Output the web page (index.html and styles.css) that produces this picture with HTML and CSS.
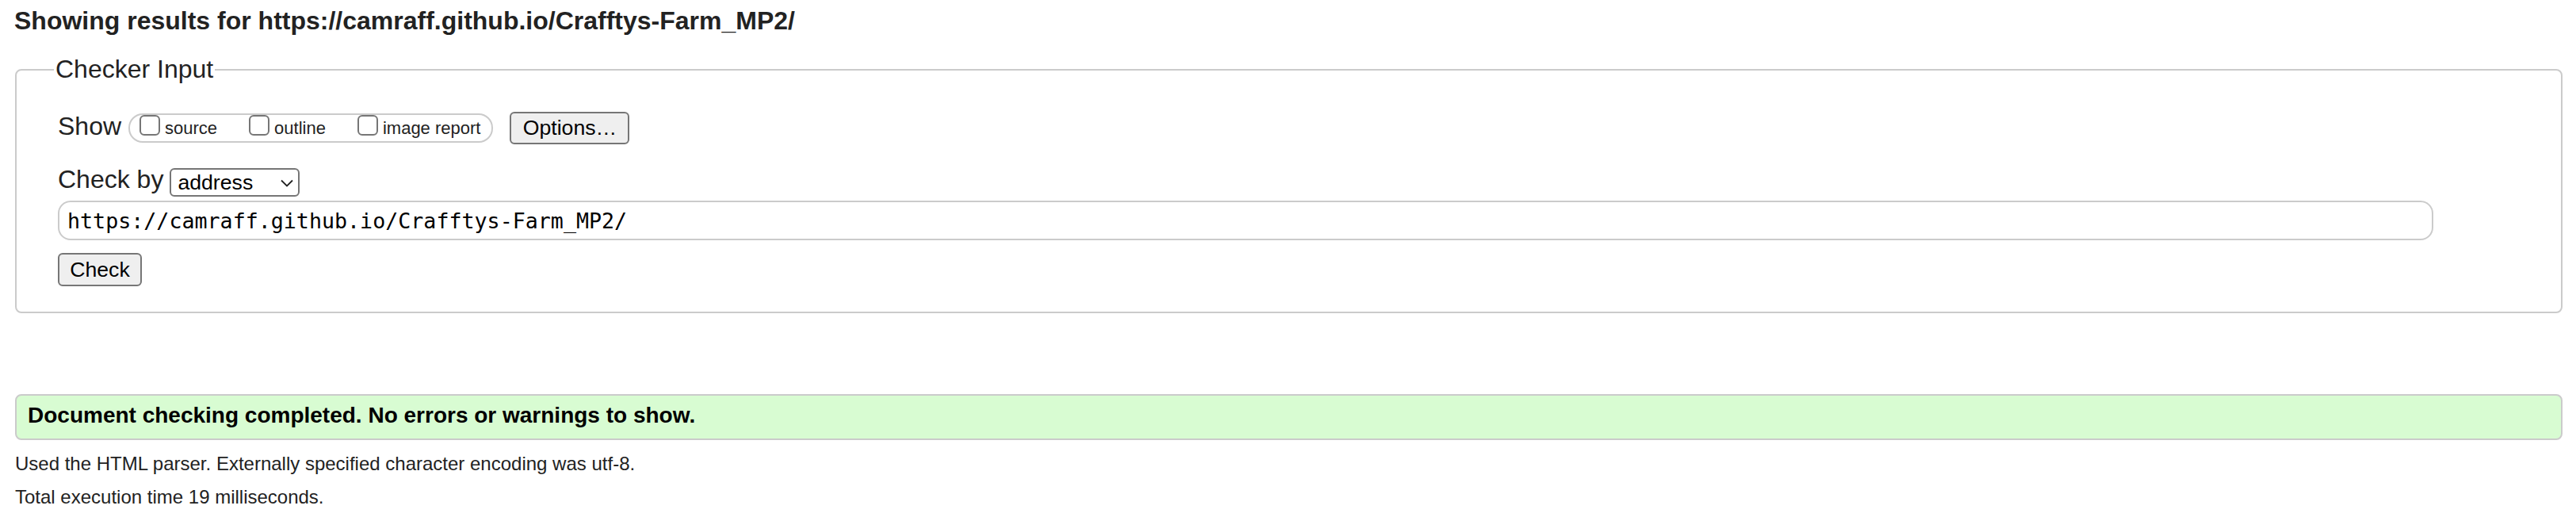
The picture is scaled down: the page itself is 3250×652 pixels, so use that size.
FILE: index.html
```html
<!DOCTYPE html>
<html lang="en">
<head>
<meta charset="utf-8">
<title>Nu Html Checker</title>
<link rel="stylesheet" href="styles.css">
</head>
<body>
<h2 class="title">Showing results for https://camraff.github.io/Crafftys-Farm_MP2/</h2>
<form class="checker">
  <fieldset class="checker-fs">
    <legend class="checker-legend">Checker Input</legend>
    <div class="fs-body">
      <div class="row row-show">
        <span class="row-label">Show</span>
        <fieldset class="show-fs">
          <label class="opt"><input type="checkbox" class="cb"><span class="opt-text">source</span></label>
          <label class="opt"><input type="checkbox" class="cb"><span class="opt-text">outline</span></label>
          <label class="opt"><input type="checkbox" class="cb"><span class="opt-text">image report</span></label>
        </fieldset>
        <button type="button" class="btn btn-options">Options…</button>
      </div>
      <div class="row row-by">
        <span class="row-label">Check by</span>
        <span class="select-wrap">
          <select class="select"><option>address</option></select>
          <svg class="chev" width="16" height="10" viewBox="0 0 16 10"><path d="M1 1.5 L8 8.5 L15 1.5" fill="none" stroke="#222" stroke-width="1.8"/></svg>
        </span>
      </div>
      <input class="url" type="text" value="https://camraff.github.io/Crafftys-Farm_MP2/">
      <button type="button" class="btn btn-check">Check</button>
    </div>
  </fieldset>
</form>
<div class="success"><p class="success-text">Document checking completed. No errors or warnings to show.</p></div>
<p class="details">Used the HTML parser. Externally specified character encoding was utf-8.</p>
<p class="details">Total execution time 19 milliseconds.</p>
</body>
</html>
```
FILE: styles.css
```css
html, body {
  margin: 0;
  background: #fff;
}
body {
  padding: 0 17px 0 19px;
  font-family: "Liberation Sans", Arial, sans-serif;
  color: #222;
}
.title {
  margin: 8px 0 0 -1px;
  font-size: 32px;
  line-height: 37px;
  font-weight: bold;
}
.checker {
  margin: 24px 0 0 0;
}
.checker-fs {
  margin: 0;
  padding: 0;
  border: 2px solid #cbcbcb;
  border-radius: 8px;
  min-width: 0;
}
.checker-legend {
  margin-left: 47px;
  padding: 0 2px;
  font-size: 32px;
  line-height: 37px;
}
.fs-body {
  padding: 35px 52px 32px 52px;
}
.row {
  display: flex;
  align-items: flex-start;
}
.row-label {
  font-size: 32px;
  line-height: 37px;
}
.row-show {
  height: 41px;
}
.show-fs {
  display: flex;
  align-items: flex-start;
  gap: 32px;
  margin: 2px 0 0 9px;
  padding: 0 14px 0 4px;
  height: 33px;
  border: 2px solid #cbcbcb;
  border-radius: 18px;
  min-width: 0;
}
.opt {
  display: flex;
  align-items: flex-end;
  height: 26px;
}
.cb {
  appearance: none;
  -webkit-appearance: none;
  width: 26px;
  height: 26px;
  margin: 0 6px 0 8px;
  border: 2px solid #767676;
  border-radius: 6px;
  background: #fff;
  box-sizing: border-box;
}
.opt-text {
  font-size: 22px;
  line-height: 22px;
  margin-bottom: -2px;
  color: #222;
}
.btn {
  font-family: "Liberation Sans", Arial, sans-serif;
  font-size: 26.67px;
  color: #000;
  background: #efefef;
  border: 2px solid #767676;
  border-radius: 6px;
  padding: 0 12px;
  margin: 0;
}
.btn-options {
  height: 41px;
  margin-left: 21px;
  width: 151px;
}
.row-by {
  margin-top: 26px;
}
.select-wrap {
  display: inline-block;
  margin: 4px 0 0 8px;
  position: relative;
}
.select {
  appearance: none;
  -webkit-appearance: none;
  display: block;
  width: 164px;
  height: 36px;
  margin: 0;
  padding: 0 0 0 8px;
  font-family: "Liberation Sans", Arial, sans-serif;
  font-size: 26.67px;
  color: #000;
  background: #fff;
  border: 2px solid #767676;
  border-radius: 6px;
}
.chev {
  position: absolute;
  left: 140px;
  top: 14px;
  pointer-events: none;
}
.url {
  display: block;
  box-sizing: border-box;
  width: 2997px;
  height: 50px;
  margin: 5px 0 0 0;
  padding: 0 10px;
  font-family: "DejaVu Sans Mono", "Liberation Mono", monospace;
  font-size: 26.67px;
  color: #000;
  background: #fff;
  border: 2px solid #cbcbcb;
  border-radius: 16px;
  outline: none;
}
.btn-check {
  display: block;
  height: 42px;
  width: 106px;
  margin-top: 16px;
}
.success {
  margin-top: 102px;
  border: 2px solid #cbcbcb;
  border-radius: 8px;
  background: #d8fcd2;
  padding: 9px 14px 13px 14px;
}
.success-text {
  margin: 0;
  font-size: 28px;
  line-height: 32px;
  font-weight: bold;
  color: #000;
}
.details {
  margin: 16px 0 0 0;
  font-size: 24px;
  line-height: 28px;
}
.details + .details {
  margin-top: 14px;
}
```
